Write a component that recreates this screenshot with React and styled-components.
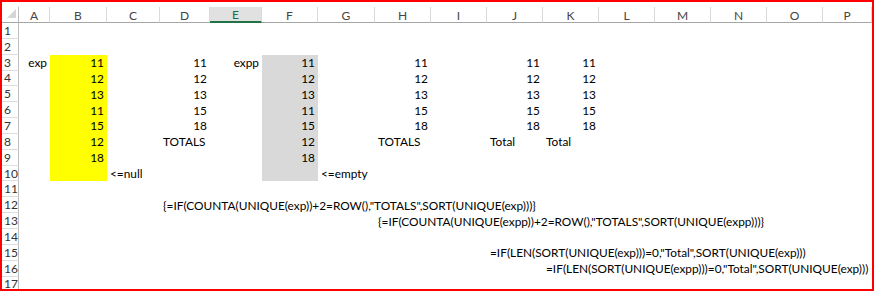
import styled, { createGlobalStyle } from "styled-components";

const GlobalStyle = createGlobalStyle`
  html, body {
    margin: 0;
    padding: 0;
    background: #fff;
  }
  body {
    width: 877px;
    height: 293px;
    overflow: hidden;
    font-family: Lato, "Liberation Sans", Arial, sans-serif;
  }
`;

const COLS = ["A", "B", "C", "D", "E", "F", "G", "H", "I", "J", "K", "L", "M", "N", "O", "P"];
const ROWS = 17;

// cell contents; numbers align right, text left unless told otherwise
const cells = {
  A3: { v: "exp", align: "right" },
  B3: { v: 11 }, B4: { v: 12 }, B5: { v: 13 }, B6: { v: 11 }, B7: { v: 15 }, B8: { v: 12 }, B9: { v: 18 },
  C10: { v: "<=null" },
  D3: { v: 11 }, D4: { v: 12 }, D5: { v: 13 }, D6: { v: 15 }, D7: { v: 18 }, D8: { v: "TOTALS" },
  E3: { v: "expp", align: "right" },
  F3: { v: 11 }, F4: { v: 12 }, F5: { v: 13 }, F6: { v: 11 }, F7: { v: 15 }, F8: { v: 12 }, F9: { v: 18 },
  G10: { v: "<=empty" },
  H3: { v: 11 }, H4: { v: 12 }, H5: { v: 13 }, H6: { v: 15 }, H7: { v: 18 }, H8: { v: "TOTALS" },
  J3: { v: 11 }, J4: { v: 12 }, J5: { v: 13 }, J6: { v: 15 }, J7: { v: 18 }, J8: { v: "Total" },
  K3: { v: 11 }, K4: { v: 12 }, K5: { v: 13 }, K6: { v: 15 }, K7: { v: 18 }, K8: { v: "Total" },
  D12: { v: '{=IF(COUNTA(UNIQUE(exp))+2=ROW(),"TOTALS",SORT(UNIQUE(exp)))}' },
  H13: { v: '{=IF(COUNTA(UNIQUE(expp))+2=ROW(),"TOTALS",SORT(UNIQUE(expp)))}' },
  J15: { v: '=IF(LEN(SORT(UNIQUE(exp)))=0,"Total",SORT(UNIQUE(exp)))' },
  K16: { v: '=IF(LEN(SORT(UNIQUE(expp)))=0,"Total",SORT(UNIQUE(exp)))' },
};

const fills = {
  B: { color: "#ffff00", from: 3, to: 10 },
  F: { color: "#d9d9d9", from: 3, to: 10 },
};

const Frame = styled.div`
  width: 874px;
  height: 291px;
  box-sizing: border-box;
  border: 2px solid #ff0000;
  padding-top: 5px;
  overflow: hidden;
  background: #fff;
`;

const Sheet = styled.div`
  display: grid;
  grid-template-columns: 17px 31px 57px 53px 50px 52px 56px 57px 56px 56px 56px 56px 56px 56px 56px 56px 1fr;
  grid-template-rows: 16px repeat(${ROWS}, 15.85px);
  font-size: 11.85px;
  color: #000;
`;

const Corner = styled.div`
  position: relative;
  border-right: 1px solid #bdbdbd;
  border-bottom: 1px solid #a6a6a6;

  &::after {
    content: "";
    position: absolute;
    right: 2px;
    bottom: 4px;
    width: 0;
    height: 0;
    border-left: 9px solid transparent;
    border-bottom: 9px solid #d6d6d6;
  }
`;

const ColHead = styled.div`
  display: flex;
  align-items: center;
  justify-content: center;
  font-size: 12px;
  color: ${(p) => (p.$active ? "#1d6b40" : "#444")};
  background: ${(p) => (p.$active ? "#e1e1e1" : "transparent")};
  border-right: 1px solid #dadada;
  border-bottom: ${(p) => (p.$active ? "2px solid #217346" : "1px solid #a6a6a6")};
  padding-top: 1px;
`;

const RowHead = styled.div`
  display: flex;
  align-items: center;
  padding-left: 2px;
  font-size: 12px;
  color: #333;
  border-right: 1px solid #bdbdbd;
  border-bottom: 1px solid #dedede;
  box-sizing: border-box;
`;

const Cell = styled.div`
  display: flex;
  align-items: center;
  justify-content: ${(p) => (p.$align === "right" ? "flex-end" : "flex-start")};
  padding: 0 3px;
  white-space: nowrap;
  overflow: visible;
  min-width: 0;
  background: ${(p) => p.$fill || "transparent"};
`;

function cellFill(col, row) {
  const f = fills[col];
  return f && row >= f.from && row <= f.to ? f.color : undefined;
}

export default function App() {
  const grid = [];
  grid.push(<Corner key="corner" />);
  COLS.forEach((c) => grid.push(<ColHead key={`h${c}`} $active={c === "E"}>{c}</ColHead>));

  for (let r = 1; r <= ROWS; r++) {
    grid.push(<RowHead key={`r${r}`}>{r}</RowHead>);
    COLS.forEach((c) => {
      const data = cells[`${c}${r}`];
      const align = data ? data.align || (typeof data.v === "number" ? "right" : "left") : "left";
      grid.push(
        <Cell key={`${c}${r}`} $align={align} $fill={cellFill(c, r)}>
          {data ? data.v : null}
        </Cell>
      );
    });
  }

  return (
    <>
      <GlobalStyle />
      <Frame>
        <Sheet>{grid}</Sheet>
      </Frame>
    </>
  );
}
